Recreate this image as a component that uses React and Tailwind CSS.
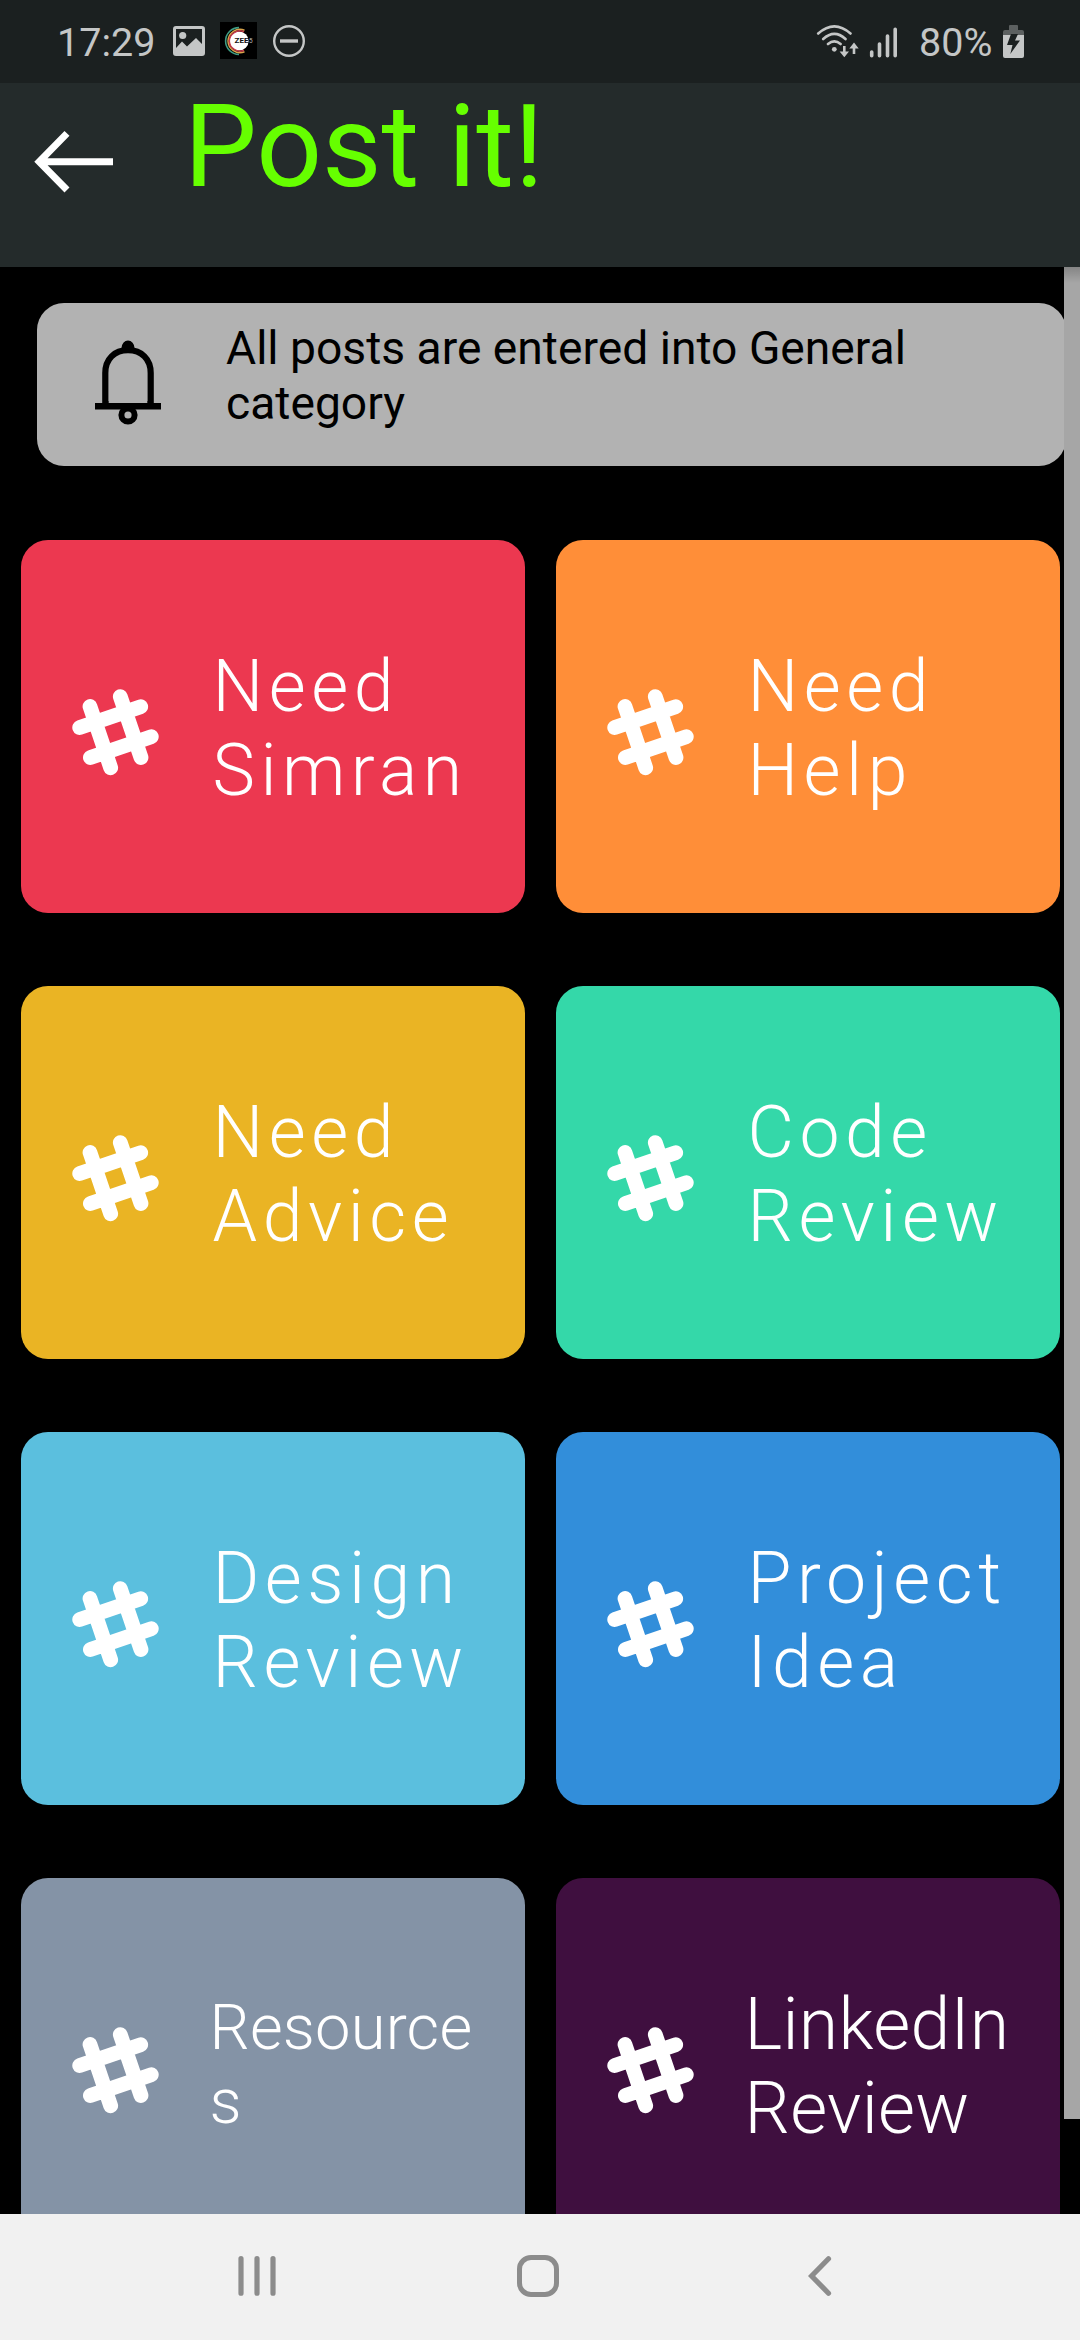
const cards = [
  { lines: ["Need", "Simran"], color: "bg-[#ec3850]" },
  { lines: ["Need", "Help"], color: "bg-[#ff8e38]" },
  { lines: ["Need", "Advice"], color: "bg-[#eab424]" },
  { lines: ["Code", "Review"], color: "bg-[#34d8a9]" },
  { lines: ["Design", "Review"], color: "bg-[#5bbfde]" },
  { lines: ["Project", "Idea"], color: "bg-[#328eda]" },
  { lines: ["Resource", "s"], color: "bg-[#8493a6]", text: "pt-[7px] text-[63.25px] leading-[74px] tracking-[0.2px] -ml-[3px]" },
  { lines: ["LinkedIn", "Review"], color: "bg-[#3f0f3f]", text: "text-[71.5px] leading-[84px] tracking-[0.3px] -ml-[3px]" },
];

function HashIcon() {
  return (
    <svg className="mt-[149px] h-[87px] w-[87px] shrink-0" viewBox="0 0 87 87" fill="none" stroke="white" strokeWidth="14.8" strokeLinecap="round">
      <path d="M18 17.5 38.7 78.8M48.3 7.6 69 68.5M7.7 38.5 68.7 17.7M18.4 68.5 79.3 47.7" />
    </svg>
  );
}

function Card({ lines, color, text }) {
  return (
    <div className={`flex h-[373.5px] items-start rounded-[27px] pl-[51px] text-white ${color}`}>
      <HashIcon />
      <div className="pl-[54px] pt-[105px] font-light">
        <div className={text || "text-[71.5px] leading-[84px] tracking-[5.5px]"}>
          {lines.map((l) => (
            <div key={l} className="whitespace-nowrap">{l}</div>
          ))}
        </div>
      </div>
    </div>
  );
}

function StatusBar() {
  return (
    <div className="flex h-[83px] shrink-0 items-start bg-[#1b2020] text-[39.5px] leading-[46px] text-[#c4c6c6]">
      <span className="ml-[57px] mt-[20px] w-[116px]">17:29</span>
      <svg className="mt-[26px] h-[30px] w-[32px]" viewBox="0 0 32 30">
        <path fillRule="evenodd" fill="#c4c6c6" d="M3 0H29Q32 0 32 3V27Q32 30 29 30H3Q0 30 0 27V3Q0 0 3 0ZM3 3V22L9 15.5 14 20.5 23 12 29 18V3Z" />
        <circle cx="9.7" cy="9.5" r="3.6" fill="#c4c6c6" />
      </svg>
      <svg className="ml-[15px] mt-[22px] h-[37px] w-[37px]" viewBox="0 0 37 37" fill="none">
        <rect width="37" height="37" fill="black" />
        <circle cx="19" cy="19" r="9.6" fill="white" />
        <path d="M19 5.6A13.4 13.4 0 0 0 19 32.4" stroke="#3f9c83" strokeWidth="1.6" />
        <path d="M24.5 8.2A12 12 0 0 0 8 19A12 12 0 0 0 24.5 29.8" stroke="#d9a54b" strokeWidth="1.5" />
        <path d="M24 9.8A10.5 10.5 0 0 0 9.3 19A10.5 10.5 0 0 0 24 28.2" stroke="#c63b4a" strokeWidth="1.5" />
        <text x="14.5" y="21.4" fontSize="6.4" fontWeight="700" fill="#111" textLength="14" lengthAdjust="spacingAndGlyphs">ZEE</text>
        <text x="29" y="21.4" fontSize="6.4" fill="#bbb">5</text>
      </svg>
      <svg className="ml-[15px] mt-[25px] h-[33px] w-[33px]" viewBox="0 0 33 33" fill="none" stroke="#c4c6c6">
        <circle cx="17" cy="16" r="14.8" strokeWidth="2.4" />
        <path d="M8 16H26" strokeWidth="3.4" />
      </svg>
      <svg className="ml-auto mt-[24px] h-[35px] w-[83px]" viewBox="0 0 83 35" fill="none" stroke="#c4c6c6" strokeLinecap="round">
        <path strokeWidth="2.6" d="M2.2 9.5Q18.3-4.8 34.5 9.5M7.2 15Q18.3 4.8 29.5 15M12 20Q18.3 14.6 24.6 20" />
        <circle cx="18.3" cy="25.3" r="2.4" fill="#c4c6c6" stroke="none" />
        <path strokeWidth="2.6" strokeLinecap="butt" d="M28.3 22V30M38 30V22" />
        <path fill="#c4c6c6" stroke="none" d="M23.6 27.5H33L28.3 33.2ZM33.3 24.5H42.7L38 18.6Z" />
        <path strokeWidth="3.6" d="M55.7 28V31.7M63.5 20V31.7M71.5 12V31.7M79.2 5.3V31.7" />
      </svg>
      <span className="ml-[20px] mt-[20px] w-[84px]">80%</span>
      <svg className="mr-[56px] mt-[25px] h-[33px] w-[21px]" viewBox="0 0 21 33">
        <path fill="#5c6060" d="M6 1Q6 0 7 0H14Q15 0 15 1V5H19Q21 5 21 7V10H0V7Q0 5 2 5H6Z" />
        <path fill="#c4c6c6" d="M0 10H21V31Q21 33 19 33H2Q0 33 0 31Z" />
        <path fill="#1b2020" d="M8 9H15L12 15.5H17L7.3 29 9.5 20H4Z" />
      </svg>
    </div>
  );
}

export default function App() {
  return (
    <div className="flex h-[2340px] w-[1080px] flex-col overflow-hidden bg-black font-['Roboto',sans-serif]">
      <StatusBar />
      <header className="flex h-[184px] shrink-0 items-start bg-[#242b2b]">
        <svg className="ml-[34px] mt-[47px] h-[64px] w-[80px]" viewBox="0 0 80 64" fill="none" stroke="white" strokeWidth="7">
          <path d="M79 31.7H5M33 3.4 5.2 31.7 33 60" />
        </svg>
        <h1 className="ml-[70px] -mt-[4px] text-[115.5px] leading-[135px] text-[#66ff00]">Post it!</h1>
      </header>
      <main className="relative flow-root h-[1947px] shrink-0 overflow-hidden">
        <div className="ml-[37px] mt-[36px] flex h-[163px] w-[1029px] items-start rounded-[27px] bg-[#b2b2b2] text-black">
          <svg className="ml-[58px] mt-[36px] h-[87px] w-[66px] shrink-0" viewBox="0 0 66 87" fill="none" stroke="black" strokeWidth="6.2">
            <path d="M10.3 68V34C10.3 20 19.5 11.2 33 11.2S55.7 20 55.7 34V68" />
            <path d="M0 67.2H66" strokeWidth="6.4" />
            <path fill="black" stroke="none" d="M26.5 9A6.5 7.5 0 0 1 39.5 9V13H26.5ZM7 65.5Q10 65 10.5 62H13.5V66H7ZM59 65.5Q56 65 55.5 62H52.5V66H59Z" />
            <circle cx="33" cy="76" r="6.6" strokeWidth="6" />
          </svg>
          <p className="ml-[65px] mt-[18px] text-[46.2px] leading-[55px]">All posts are entered into General<br />category</p>
        </div>
        <div className="ml-[20.5px] mt-[73.5px] grid w-[1039px] grid-cols-2 gap-x-[31px] gap-y-[72.6px]">
          {cards.map((c, i) => (
            <Card key={i} {...c} />
          ))}
        </div>
        <div className="absolute right-0 top-0 h-[1852px] w-4 bg-[#a6a6a6]" />
        <div className="absolute right-0 top-0 h-4 w-4 bg-gradient-to-b from-black/20 to-transparent" />
      </main>
      <nav className="flex h-[126px] shrink-0 items-start bg-[#f1f1f1] pt-[41px]">
        <svg className="ml-[238px] h-[42px] w-[38px]" viewBox="0 0 38 42" stroke="#8c8c8c" strokeWidth="5.2" strokeLinecap="round">
          <path d="M3 3.6V38.2M19 3.6V38.2M35 3.6V38.2" />
        </svg>
        <svg className="ml-[241px] h-[42px] w-[42px]" viewBox="0 0 42 42" fill="none" stroke="#8c8c8c" strokeWidth="5">
          <rect x="2.5" y="2.5" width="37" height="37" rx="11.5" />
        </svg>
        <svg className="ml-[249px] h-[42px] w-[24px]" viewBox="0 0 24 42" fill="none" stroke="#8c8c8c" strokeWidth="5.2" strokeLinecap="round">
          <path d="M20.5 3.8 3.6 21 20.5 38.2" />
        </svg>
      </nav>
    </div>
  );
}
